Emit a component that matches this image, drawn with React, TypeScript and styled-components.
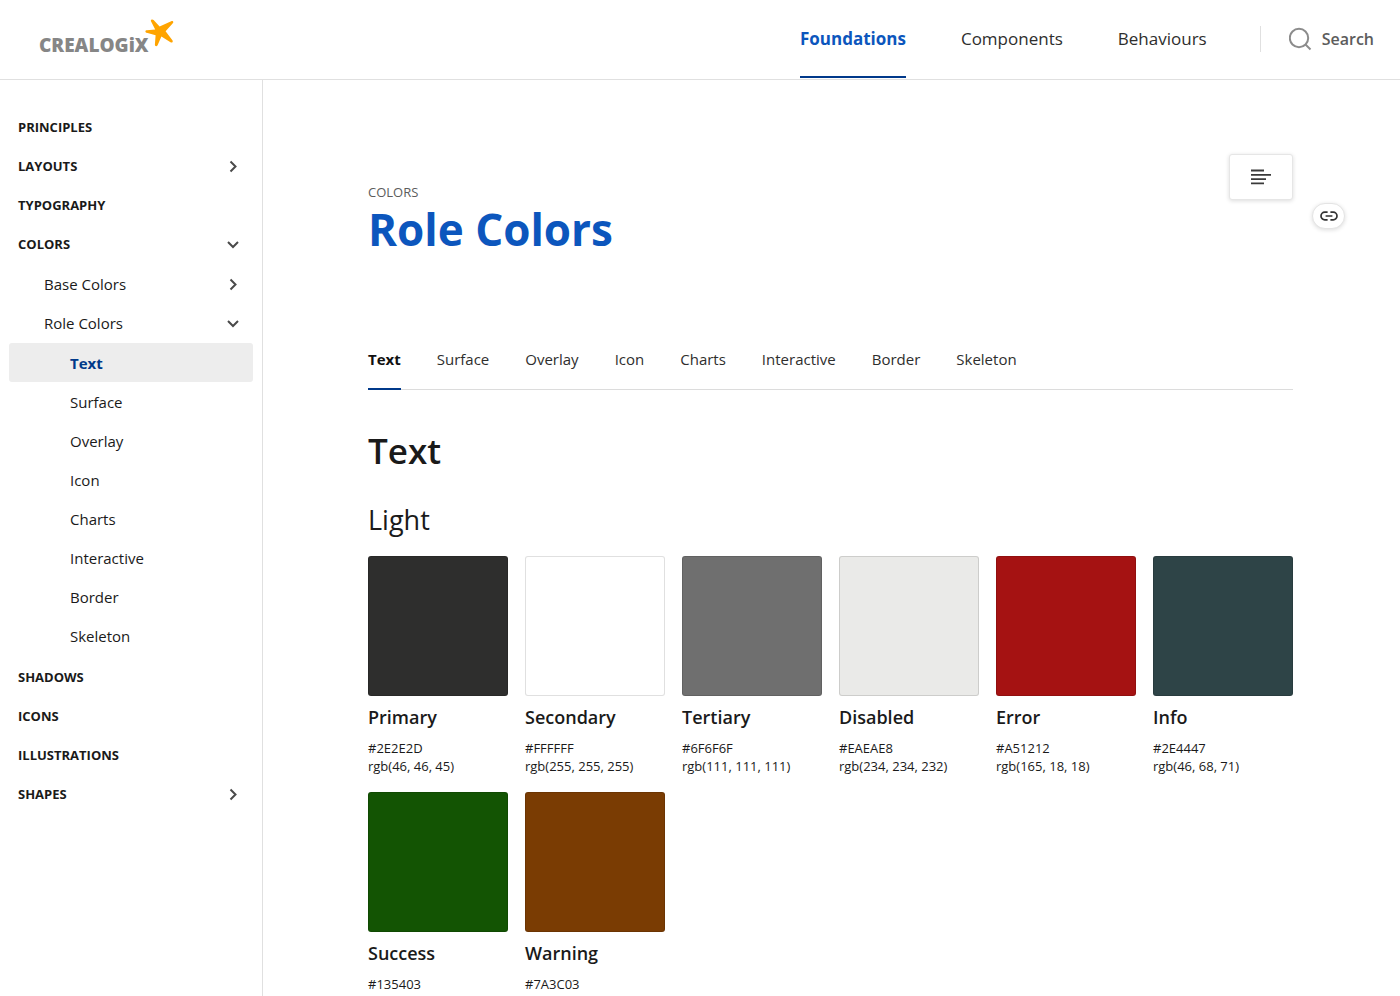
import React from "react";
import styled, { createGlobalStyle, css } from "styled-components";

const GlobalStyle = createGlobalStyle`
  *, *::before, *::after { box-sizing: border-box; }
  html, body, #root { height: 100%; }
  body {
    margin: 0;
    background: #fff;
    color: #1a1a1a;
    font-family: "Open Sans", "Noto Sans", sans-serif;
    font-size: 15px;
  }
  a { color: inherit; text-decoration: none; }
  button { font: inherit; color: inherit; background: none; border: 0; padding: 0; cursor: pointer; }
  ul { list-style: none; margin: 0; padding: 0; }
  h1, h2, h3, h4, p { margin: 0; }
`;

const Shell = styled.div`
  display: flex;
  flex-direction: column;
  height: 100vh;
`;

const Header = styled.header`
  display: flex;
  flex: none;
  justify-content: space-between;
  height: 80px;
  padding: 0 26px 0 39px;
  border-bottom: 1px solid #e0e0e0;
`;

const Logo = styled.a`
  display: flex;
  align-items: flex-start;
  padding-top: 19px;
  color: #868686;

  svg {
    margin-left: -4px;
  }
`;

const LogoName = styled.span`
  padding-top: 14px;
  font-size: 19px;
  font-weight: 800;
  line-height: 24px;
`;

const HeaderEnd = styled.div`
  display: flex;
  align-items: flex-start;
`;

const TopNav = styled.nav`
  display: flex;
  gap: 55px;
`;

const TopLink = styled.a<{ $active?: boolean }>`
  height: 78px;
  padding-top: 27px;
  font-size: 17px;
  line-height: 24px;
  color: #2e2e2d;
  border-bottom: 2px solid transparent;
  ${(p) =>
    p.$active &&
    css`
      font-weight: 700;
      color: #0c56bd;
      border-bottom-color: #00398a;
    `}
`;

const SearchButton = styled.button`
  display: flex;
  align-items: center;
  gap: 10px;
  height: 26px;
  margin: 26px 0 0 53px;
  padding-left: 28px;
  border-left: 1px solid #e0e0e0;
  font-size: 16px;
  font-weight: 600;
  color: #5c5c5c;
`;

const Body = styled.div`
  display: flex;
  flex: 1;
  min-height: 0;
`;

const Sidebar = styled.nav`
  flex: none;
  width: 263px;
  padding: 27px 9px;
  border-right: 1px solid #e0e0e0;
  overflow-y: auto;
  scrollbar-width: none;
`;

const SubList = styled.ul`
  padding: 1px 0;
`;

const SideLink = styled.a<{ $level: number; $active?: boolean }>`
  display: flex;
  align-items: center;
  justify-content: space-between;
  height: 39px;
  padding: 0 12px 0 ${(p) => 9 + p.$level * 26}px;
  border-radius: 3px;
  font-size: ${(p) => (p.$level ? 15 : 13)}px;
  font-weight: ${(p) => (p.$level ? 400 : 700)};
  text-transform: ${(p) => (p.$level ? "none" : "uppercase")};
  ${(p) =>
    p.$active &&
    css`
      background: #ededed;
      color: #00398a;
      font-weight: 700;
    `}
`;

const Main = styled.main`
  display: flex;
  flex: 1;
  align-items: flex-start;
  min-width: 0;
  padding: 74px 55px 0 105px;
  gap: 19px;
  overflow-y: auto;
  scrollbar-width: none;
`;

const Content = styled.div`
  flex: 1;
  min-width: 0;
`;

const TitleRow = styled.div`
  display: flex;
  align-items: flex-start;
  justify-content: space-between;
`;

const TitleGroup = styled.div`
  padding-top: 29px;
`;

const Overline = styled.p`
  font-size: 13px;
  line-height: 18px;
  color: #5c5c5c;
  text-transform: uppercase;
`;

const Title = styled.h1`
  font-size: 44px;
  font-weight: 700;
  line-height: 56px;
  color: #0c56bd;
`;

const OutlineButton = styled.button`
  display: grid;
  place-items: center;
  width: 64px;
  height: 46px;
  border: 1px solid #e6e6e6;
  border-radius: 3px;
  background: #fff;
  box-shadow: 0 1px 4px rgba(0, 0, 0, 0.14);
`;

const CopyLinkButton = styled.button`
  display: grid;
  flex: none;
  place-items: center;
  width: 33px;
  height: 26px;
  margin-top: 49px;
  border: 1px solid #e4e4e4;
  border-radius: 13px;
  background: #fff;
  box-shadow: 0 1px 4px rgba(0, 0, 0, 0.14);
`;

const Tabs = styled.nav`
  display: flex;
  gap: 36px;
  height: 53px;
  margin-top: 80px;
  border-bottom: 1px solid #dcdcdc;
`;

const Tab = styled.a<{ $active?: boolean }>`
  height: 53px;
  padding-top: 12px;
  line-height: 20px;
  color: #2e2e2d;
  border-bottom: 2px solid transparent;
  ${(p) =>
    p.$active &&
    css`
      font-weight: 700;
      color: #111;
      border-bottom-color: #00398a;
    `}
`;

const SectionTitle = styled.h2`
  margin-top: 37px;
  font-size: 35px;
  font-weight: 600;
  line-height: 48px;
`;

const SectionSubtitle = styled.h3`
  margin-top: 27px;
  font-size: 27px;
  font-weight: 400;
  line-height: 36px;
`;

const SwatchGrid = styled.ul`
  display: grid;
  grid-template-columns: repeat(6, minmax(0, 1fr));
  gap: 17px;
  margin-top: 18px;
  padding-bottom: 52px;
`;

const Swatch = styled.div<{ $color: string }>`
  aspect-ratio: 1;
  border: 1px solid rgba(0, 0, 0, 0.12);
  border-radius: 3px;
  background: ${(p) => p.$color};
`;

const SwatchName = styled.h4`
  margin: 9px 0 10px;
  font-size: 18px;
  font-weight: 600;
  line-height: 24px;
`;

const SwatchValue = styled.p`
  font-size: 13px;
  line-height: 18px;
`;

const LogoStar = () => (
  <svg width="29" height="28" viewBox="0 0 29 28" fill="#ffa400" aria-hidden="true">
    <path d="M6.3.7C7.1.1 7.9.4 8.6 1.1L14.6 7.6 26.2 2.2C27.8 1.4 29 3 27.8 4.2L20.6 12.2 27.4 21.2C28.4 22.9 27.1 24.3 25.5 23.2L16.4 17.6 12.6 26.2C11.6 27.8 9.7 27.2 9.9 25.4L10.6 16.2 1.7 13.8C-.1 13.2 0 11.3 1.9 11.3L10.2 10.4 6.1 2.4C5.7 1.7 5.8 1.1 6.3.7Z" />
  </svg>
);

const SearchIcon = () => (
  <svg width="23" height="24" viewBox="0 0 23 24" fill="none" stroke="#8c8c8c" strokeWidth="2" aria-hidden="true">
    <circle cx="10" cy="11" r="9.2" />
    <path d="M16.5 17.5L21.5 22.5" />
  </svg>
);

const Chevron = ({ open }: { open?: boolean }) => (
  <svg width="16" height="16" viewBox="0 0 16 16" fill="none" stroke="#4a4a4a" strokeWidth="2" aria-hidden="true">
    <path d={open ? "M3 6L8 11L13 6" : "M5.5 3.5L10.5 8.5L5.5 13.5"} />
  </svg>
);

const OutlineIcon = () => (
  <svg width="20" height="18" viewBox="0 0 20 18" stroke="#3a3a3a" strokeWidth="1.8" aria-hidden="true">
    <path d="M0 2.5H13M0 6.8H20M0 11.1H15M0 15.4H13" />
  </svg>
);

const LinkIcon = () => (
  <svg width="18" height="10" viewBox="0 0 18 10" fill="none" stroke="#333" strokeWidth="1.7" aria-hidden="true">
    <path d="M7.6 1.2H4.8a3.8 3.8 0 0 0 0 7.6H7.6M10.4 1.2H13.2a3.8 3.8 0 0 1 0 7.6H10.4M5.6 5H12.4" />
  </svg>
);

type NavItem = {
  label: string;
  expandable?: boolean;
  active?: boolean;
  children?: NavItem[];
};

const sections = ["Text", "Surface", "Overlay", "Icon", "Charts", "Interactive", "Border", "Skeleton"];

const sideNav: NavItem[] = [
  { label: "Principles" },
  { label: "Layouts", expandable: true },
  { label: "Typography" },
  {
    label: "Colors",
    expandable: true,
    children: [
      { label: "Base Colors", expandable: true },
      {
        label: "Role Colors",
        expandable: true,
        children: sections.map((label) => ({ label, active: label === "Text" })),
      },
    ],
  },
  { label: "Shadows" },
  { label: "Icons" },
  { label: "Illustrations" },
  { label: "Shapes", expandable: true },
];

const swatches = [
  { name: "Primary", hex: "#2E2E2D", rgb: "rgb(46, 46, 45)" },
  { name: "Secondary", hex: "#FFFFFF", rgb: "rgb(255, 255, 255)" },
  { name: "Tertiary", hex: "#6F6F6F", rgb: "rgb(111, 111, 111)" },
  { name: "Disabled", hex: "#EAEAE8", rgb: "rgb(234, 234, 232)" },
  { name: "Error", hex: "#A51212", rgb: "rgb(165, 18, 18)" },
  { name: "Info", hex: "#2E4447", rgb: "rgb(46, 68, 71)" },
  { name: "Success", hex: "#135403", rgb: "rgb(19, 84, 3)" },
  { name: "Warning", hex: "#7A3C03", rgb: "rgb(122, 60, 3)" },
];

const SideItem = ({ item, level }: { item: NavItem; level: number }) => (
  <li>
    <SideLink href="#" $level={level} $active={item.active} aria-current={item.active ? "page" : undefined}>
      {item.label}
      {item.expandable && <Chevron open={!!item.children} />}
    </SideLink>
    {item.children && (
      <SubList>
        {item.children.map((child) => (
          <SideItem key={child.label} item={child} level={level + 1} />
        ))}
      </SubList>
    )}
  </li>
);

export default function App() {
  return (
    <Shell>
      <GlobalStyle />
      <Header>
        <Logo href="#">
          <LogoName>CREALOGiX</LogoName>
          <LogoStar />
        </Logo>
        <HeaderEnd>
          <TopNav aria-label="Main">
            <TopLink href="#" $active>Foundations</TopLink>
            <TopLink href="#">Components</TopLink>
            <TopLink href="#">Behaviours</TopLink>
          </TopNav>
          <SearchButton type="button">
            <SearchIcon />
            Search
          </SearchButton>
        </HeaderEnd>
      </Header>
      <Body>
        <Sidebar aria-label="Foundations">
          <ul>
            {sideNav.map((item) => (
              <SideItem key={item.label} item={item} level={0} />
            ))}
          </ul>
        </Sidebar>
        <Main>
          <Content>
            <TitleRow>
              <TitleGroup>
                <Overline>Colors</Overline>
                <Title>Role Colors</Title>
              </TitleGroup>
              <OutlineButton type="button" aria-label="Page outline">
                <OutlineIcon />
              </OutlineButton>
            </TitleRow>
            <Tabs aria-label="Sections">
              {sections.map((label) => (
                <Tab key={label} href="#" $active={label === "Text"}>
                  {label}
                </Tab>
              ))}
            </Tabs>
            <SectionTitle>Text</SectionTitle>
            <SectionSubtitle>Light</SectionSubtitle>
            <SwatchGrid>
              {swatches.map((s) => (
                <li key={s.name}>
                  <Swatch $color={s.hex} />
                  <SwatchName>{s.name}</SwatchName>
                  <SwatchValue>{s.hex}</SwatchValue>
                  <SwatchValue>{s.rgb}</SwatchValue>
                </li>
              ))}
            </SwatchGrid>
          </Content>
          <CopyLinkButton type="button" aria-label="Copy link">
            <LinkIcon />
          </CopyLinkButton>
        </Main>
      </Body>
    </Shell>
  );
}
